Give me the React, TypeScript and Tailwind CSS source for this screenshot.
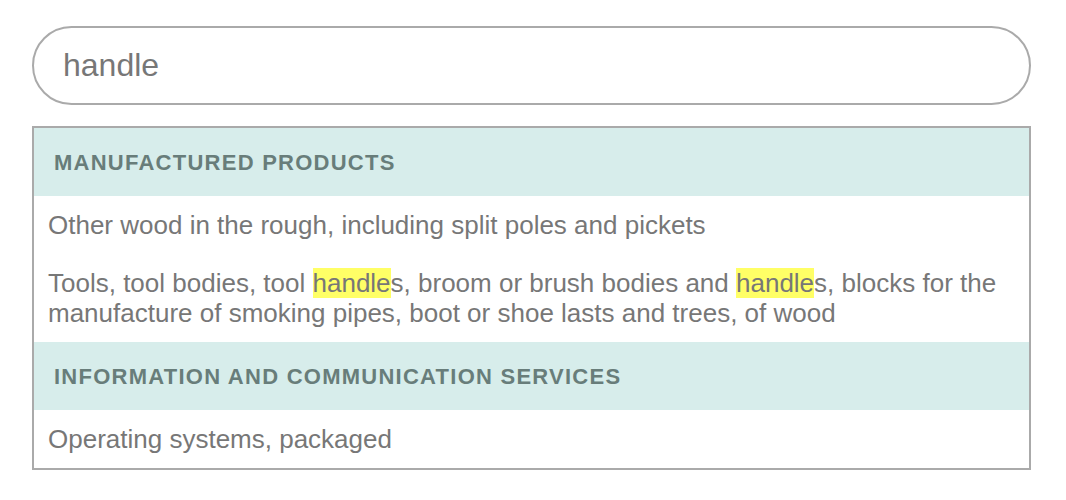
import React from "react";

function HL({ children }: { children: React.ReactNode }) {
  return <mark className="bg-[#ffff66] text-[#777777]">{children}</mark>;
}

export default function App() {
  return (
    <div className="min-h-[500px] bg-white px-8 pt-[26px]" style={{ fontFamily: '"Liberation Sans", Arial, sans-serif' }}>
      <div className="w-[999px]">
        <div className="flex h-[79px] items-center rounded-full border-2 border-[#aaaaaa] px-[29px]">
          <span className="text-[32px] leading-[37px] text-[#777777]">handle</span>
        </div>
        <div className="mt-[21px] border-2 border-[#aaaaaa]">
          <div className="flex h-[68px] items-center bg-[#d7edeb] px-5">
            <span className="text-[22px] font-bold leading-[25px] tracking-[1.25px] text-[#687d7a]">MANUFACTURED PRODUCTS</span>
          </div>
          <div className="px-[14px] text-[26px] leading-[30px] text-[#777777]">
            <div className="py-[14px]">Other wood in the rough, including split poles and pickets</div>
            <div className="py-[14px]">
              Tools, tool bodies, tool <HL>handle</HL>s, broom or brush bodies and <HL>handle</HL>s, blocks for the manufacture of smoking pipes, boot or shoe lasts and trees, of wood
            </div>
          </div>
          <div className="flex h-[68px] items-center bg-[#d7edeb] px-5">
            <span className="text-[22px] font-bold leading-[25px] tracking-[1.25px] text-[#687d7a]">INFORMATION AND COMMUNICATION SERVICES</span>
          </div>
          <div className="px-[14px] text-[26px] leading-[30px] text-[#777777]">
            <div className="py-[14px]">Operating systems, packaged</div>
          </div>
        </div>
      </div>
    </div>
  );
}
